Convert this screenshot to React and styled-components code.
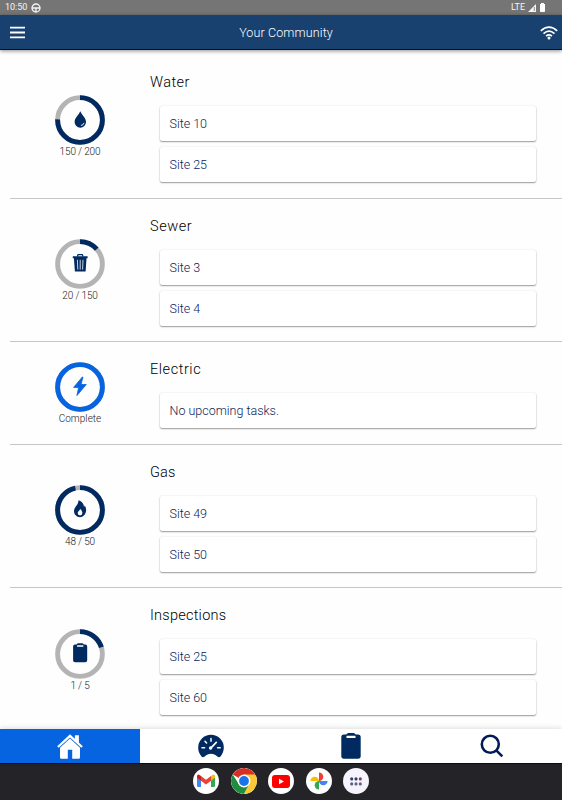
import React from 'react';
import styled, { createGlobalStyle } from 'styled-components';

const navy = '#002a60';
const blue = '#0664e0';

const GlobalStyle = createGlobalStyle`
* { box-sizing: border-box; }
html, body { margin: 0; padding: 0; background: #fefefe; }
body {
    font-family: Roboto, "Liberation Sans", sans-serif;
    overflow: hidden;
}
`;

const Screen = styled.div`
width: 562px;
height: 800px;
display: flex;
flex-direction: column;
background: #fefefe;
overflow: hidden;
`;

const StatusBar = styled.div`
height: 15px;
flex: none;
display: flex;
align-items: center;
gap: 3.5px;
padding: 0 16px 0 5px;
background: #757575;
color: #f4f4f4;
font-size: 9px;
line-height: 15px;
`;

const StatusRight = styled.div`
margin-left: auto;
display: flex;
align-items: center;
gap: 2.5px;
`;

const Header = styled.header`
height: 35px;
flex: none;
display: grid;
grid-template-columns: 60px 1fr 60px;
align-items: center;
padding: 1px 4px 0 10px;
background: #18416f;
border-bottom: 1px solid #000b4c;
box-shadow: 0 1px 4px rgba(0, 0, 0, 0.45);
z-index: 1;
`;

const HeaderTitle = styled.h1`
margin: 0;
padding-left: 4px;
text-align: center;
color: #fff;
font-size: 12.5px;
font-weight: 300;
letter-spacing: ${props => props.$spacing}px;
`;

const WifiHolder = styled.div`
display: flex;
justify-content: flex-end;
`;

const List = styled.main`
flex: 1;
min-height: 0;
overflow: hidden;
padding: 5px 0 0 10px;
`;

const Section = styled.section`
display: flex;
height: ${props => props.$single ? 102.5 : 143.5}px;
border-bottom: 1px solid #c6c6c6;
&:last-child { border-bottom: none; }
`;

const Progress = styled.div`
width: 140px;
flex: none;
display: flex;
flex-direction: column;
align-items: center;
justify-content: center;
`;

const Dial = styled.svg`
display: block;
width: 50px;
height: 50px;
`;

const Count = styled.div`
height: 12px;
font-size: 10px;
line-height: 13px;
font-weight: 300;
color: #222;
letter-spacing: ${props => props.$spacing}px;
`;

const Tasks = styled.div`
flex: 1;
padding: 16px 26px 0 0;
`;

const Title = styled.h2`
margin: 0;
height: 35px;
font-size: 14.5px;
line-height: 23px;
font-weight: 300;
color: #000;
letter-spacing: ${props => props.$spacing}px;
`;

const Card = styled.div`
height: 35px;
margin: 0 0 6.2px 9.5px;
padding-left: 10px;
border-radius: 2px;
background: #fff;
box-shadow: 0 1px 1.5px rgba(0, 0, 0, 0.38), 0 0 2px rgba(0, 0, 0, 0.1);
color: #0b1c58;
font-size: 12.5px;
font-weight: 300;
line-height: 35px;
letter-spacing: ${props => props.$spacing}px;
`;

const TabBar = styled.nav`
height: 34px;
flex: none;
display: grid;
grid-template-columns: 140px 141px 140px 141px;
background: #fff;
box-shadow: 0 -1px 5px rgba(0, 0, 0, 0.13);
z-index: 1;
`;

const Tab = styled.div`
display: flex;
align-items: center;
justify-content: center;
background: ${props => props.$active ? blue : '#fff'};
`;

const SystemBar = styled.footer`
height: 37px;
flex: none;
display: flex;
align-items: center;
justify-content: center;
gap: 11.5px;
padding-bottom: 2px;
border-top: 1px solid #0b0e0c;
background: #242328;
`;

const AppButton = styled.div`
width: 26px;
height: 26px;
display: flex;
align-items: center;
justify-content: center;
border-radius: 50%;
overflow: hidden;
background: ${props => props.$tint || '#fff'};
`;

// icons inside the dials, drawn on the 50x50 canvas of the dial
const Drop = () => (
    <g>
        <path d="M25.300 16.300C23.800 20 19.600 22.800 19.600 27a5.700 5.700 0 0 0 11.400 0C31 22.800 26.800 20 25.300 16.300z" />
        <path d="M29 28.200a3 3 0 0 1-2.700 2.200" fill="none" stroke="#fff" strokeWidth=".9" strokeLinecap="round" />
    </g>
);

const Trash = () => (
    <g>
        <path d="M22.700 17.600v-1.100q0-.8.800-.8h3.400q.8 0 .8.800v1.100" fill="none" stroke="currentColor" strokeWidth="1.300" />
        <path d="M17.800 17.300h14.800v1.900h-1.100L30.600 32.600H19.900L18.900 19.200h-1.100z" />
        <path d="M22.400 20.800l.4 9.800M25.200 20.800v9.800M28 20.800l-.4 9.800" stroke="#fff" strokeWidth=".8" />
    </g>
);

const Bolt = () => <path d="M27.300 15L18.600 25.400h5l-1.700 8.200 9.400-11.100h-5.300l2-7.500z" stroke="currentColor" strokeWidth=".8" />;

const Flame = () => (
    <g>
        <path d="M23.500 15.200c3.500 1 5.200 3.500 5.500 6.500.4-.3.700-.8.800-1.300 1 1.900 1.500 3.500 1.300 5.400-.4 3.700-3 6.400-6.100 6.400-3.400 0-6-2.700-6-6.100 0-4 4.600-5.800 4.500-10.900z" />
        <path d="M25.300 24c1.500 1.500 2.100 2.900 2.100 4.100a2.300 2.300 0 0 1-4.700 0c0-1.600 1.500-2.200 2.600-4.100z" fill="#fff" />
    </g>
);

const Clipboard = () => (
    <g>
        <path d="M20 15.500h1.600q.6-1.300 1.800-1.300h3.600q1.200 0 1.800 1.300h1.500q1.900 0 1.900 1.900v13.900q0 1.900-1.900 1.900H20q-1.900 0-1.900-1.900V17.400q0-1.900 1.900-1.900z" />
        <rect x="22" y="16.300" width="6.400" height="1.500" rx=".4" fill="#fff" />
    </g>
);

const sections = [
    { name: 'Water', spacing: 0.45, icon: <Drop />, done: 150, total: 200, sites: ['Site 10', 'Site 25'] },
    { name: 'Sewer', spacing: 0.55, icon: <Trash />, done: 20, total: 150, sites: ['Site 3', 'Site 4'] },
    { name: 'Electric', spacing: 0.55, icon: <Bolt />, done: 1, total: 1, sites: [] },
    { name: 'Gas', spacing: 0.1, icon: <Flame />, done: 48, total: 50, sites: ['Site 49', 'Site 50'] },
    { name: 'Inspections', spacing: 0.25, icon: <Clipboard />, done: 1, total: 5, sites: ['Site 25', 'Site 60'] },
];

const RING = 2 * Math.PI * 22.4;

function ProgressDial({ done, total, icon }) {
    const complete = done === total;
    const color = complete ? blue : navy;
    return (
        <Progress>
            <Dial viewBox="0 0 50 50" color={color} fill={color}>
                <circle cx="25" cy="25" r="22.4" fill="none" stroke="#b4b4b4" strokeWidth="4.900" />
                <circle
                    cx="25" cy="25" r="22.4" fill="none" stroke={color} strokeWidth="4.900"
                    strokeDasharray={complete ? undefined : `${RING * done / total} ${RING}`}
                    transform="rotate(-90 25 25)"
                />
                {icon}
            </Dial>
            <Count $spacing={complete ? 0.05 : -0.15}>{complete ? 'Complete' : `${done} / ${total}`}</Count>
        </Progress>
    );
}

function TaskSection({ section }) {
    const { name, spacing, sites } = section;
    return (
        <Section $single={sites.length === 0}>
            <ProgressDial {...section} />
            <Tasks>
                <Title $spacing={spacing}>{name}</Title>
                {sites.map(site => <Card key={site} $spacing={-0.02}>{site}</Card>)}
                {sites.length === 0 && <Card $spacing={0}>No upcoming tasks.</Card>}
            </Tasks>
        </Section>
    );
}

const GlobeIcon = () => (
    <svg width="10" height="10" viewBox="0 0 10 10" fill="none" stroke="#f4f4f4" strokeWidth="1.300">
        <circle cx="5" cy="5" r="4" />
        <path d="M1 5h8M5 5v4" />
    </svg>
);

const MenuIcon = () => (
    <svg width="15" height="13" viewBox="0 0 15 13" fill="#fff">
        <path d="M0 .8h15v1.800H0zM0 5.600h15v1.800H0zM0 10.400h15v1.800H0z" />
    </svg>
);

const WifiIcon = () => (
    <svg width="18" height="14" viewBox="0 0 18 14" fill="none" stroke="#fff" strokeWidth="1.700">
        <path d="M.8 4.900Q9-2.500 17.200 4.900M3.500 7.600q5.500-4.800 11 0M6.100 10.200q2.900-2.500 5.800 0" />
        <circle cx="9" cy="12.100" r="1.500" fill="#fff" stroke="none" />
    </svg>
);

const HomeIcon = () => (
    <svg width="26" height="25" viewBox="0 0 26 25" fill="#fff">
        <path d="M13 .2L.2 12.200l1.500 1.600L13 3.400l11.300 10.400 1.500-1.600-3.900-3.700V1.200h-4v3.600z" />
        <path d="M13 4.500L3 13.700v9.700q0 1.300 1.300 1.300h6.500v-8.900h4.400v8.900h6.400q1.400 0 1.400-1.300v-9.700z" />
    </svg>
);

const GaugeIcon = () => (
    <svg width="26" height="24" viewBox="0 0 26 24">
        <path d="M3.500 22.500A12.800 12.800 0 0 1 .2 13.600a12.800 12.800 0 0 1 25.600 0c0 3.400-1.200 6.500-3.300 8.900-.8.900-2 .8-2.800.3-4.100-4.200-9.300-4.200-13.400 0-.8.500-2 .6-2.800-.3z" fill={navy} />
        <path d="M13 4.400v2.800M7 7.300l1.600 1.700M4 13.800h2.600M19.600 13.800h2.600" stroke="#fff" strokeWidth="1.500" strokeLinecap="round" />
        <path d="M12.500 14.300l5.800-5.900" stroke="#fff" strokeWidth="1.700" strokeLinecap="round" />
        <circle cx="12.600" cy="14" r="1.700" fill="#fff" />
    </svg>
);

const ClipboardTabIcon = () => (
    <svg width="20" height="26" viewBox="0 0 20 26" fill={navy}>
        <path d="M3 1.600h2.300Q6 0 7.500 0h5Q14 0 14.700 1.600H17q2.700 0 2.700 2.700V23q0 2.700-2.700 2.700H3Q.3 25.700.3 23V4.300q0-2.700 2.700-2.700z" />
        <rect x="5.400" y="2.800" width="9.200" height="2.200" rx=".7" fill="#fff" />
    </svg>
);

const SearchIcon = () => (
    <svg width="24" height="24" viewBox="0 0 24 24" fill="none" stroke="#001b58" strokeWidth="2.600">
        <circle cx="10.300" cy="10.300" r="8.500" />
        <path d="M16.300 16.300l6 6" />
    </svg>
);

const GmailIcon = () => (
    <svg width="18" height="14" viewBox="0 0 18 14">
        <path d="M0 2.500l4 3V13H1.200Q0 13 0 11.800z" fill="#4285f4" />
        <path d="M18 2.500l-4 3V13h2.800q1.200 0 1.200-1.200z" fill="#34a853" />
        <path d="M14 2l1.400-1.100Q18-.4 18 2.500v1.300l-4 3z" fill="#fbbc04" />
        <path d="M4 2L2.600.9Q0-.4 0 2.500v1.300l4 3z" fill="#c5221f" />
        <path d="M4 2l5 3.800L14 2v4.800l-5 3.800-5-3.800z" fill="#ea4335" />
    </svg>
);

const ChromeIcon = () => (
    <svg width="26" height="26" viewBox="0 0 26 26">
        <path d="M13 13L1.740 6.500A13 13 0 0 1 24.260 6.500z" fill="#d93025" />
        <path d="M13 6.400h11.260A13 13 0 0 1 12.900 26L18.200 16z" fill="#fcc934" />
        <path d="M1.740 6.500A13 13 0 0 0 12.900 26L18.200 16 13 13 7.800 16z" fill="#1e8e3e" />
        <circle cx="13" cy="13" r="6.400" fill="#fff" />
        <circle cx="13" cy="13" r="4.900" fill="#1a73e8" />
    </svg>
);

const YoutubeIcon = () => (
    <svg width="18" height="13" viewBox="0 0 18 13">
        <rect width="18" height="13" rx="3" fill="#f00" />
        <path d="M7 3.700v5.600l5-2.800z" fill="#fff" />
    </svg>
);

const PhotosIcon = () => (
    <svg width="18" height="18" viewBox="0 0 18 18">
        <path d="M9 9H.4a4.300 4.300 0 0 1 8.600 0z" fill="#fbbc04" />
        <path d="M9 9V.4a4.300 4.300 0 0 1 0 8.600z" fill="#ea4335" />
        <path d="M9 9h8.600a4.300 4.300 0 0 1-8.600 0z" fill="#4285f4" />
        <path d="M9 9v8.600A4.300 4.300 0 0 1 9 9z" fill="#34a853" />
    </svg>
);

const DotsIcon = () => (
    <svg width="12" height="9" viewBox="0 0 12 9">
        <circle cx="1.700" cy="1.900" r="1.550" fill="#24427a" />
        <circle cx="6" cy="1.900" r="1.550" fill="#3b3564" />
        <circle cx="10.300" cy="1.900" r="1.550" fill="#714064" />
        <circle cx="1.700" cy="6.900" r="1.550" fill="#536080" />
        <circle cx="6" cy="6.900" r="1.550" fill="#5e6380" />
        <circle cx="10.300" cy="6.900" r="1.550" fill="#5e6380" />
    </svg>
);

export default function App() {
    return (
        <Screen>
            <GlobalStyle />
            <StatusBar>
                <span>10:50</span>
                <GlobeIcon />
                <StatusRight>
                    <span>LTE</span>
                    <svg width="8" height="8" viewBox="0 0 8 8">
                        <path d="M8 0v8H0z" fill="#f4f4f4" />
                        <path d="M6.300 3v4" stroke="#757575" strokeWidth=".8" />
                    </svg>
                    <svg width="8" height="9" viewBox="0 0 8 9" fill="#fff">
                        <path d="M3 0h3v1h1v7.200q0 .8-.8.800H2.800Q2 9 2 8.200V1h1z" />
                    </svg>
                </StatusRight>
            </StatusBar>
            <Header>
                <MenuIcon />
                <HeaderTitle $spacing={0.12}>Your Community</HeaderTitle>
                <WifiHolder><WifiIcon /></WifiHolder>
            </Header>
            <List>
                {sections.map(section => <TaskSection key={section.name} section={section} />)}
            </List>
            <TabBar>
                <Tab $active><HomeIcon /></Tab>
                <Tab><GaugeIcon /></Tab>
                <Tab><ClipboardTabIcon /></Tab>
                <Tab><SearchIcon /></Tab>
            </TabBar>
            <SystemBar>
                <AppButton><GmailIcon /></AppButton>
                <AppButton><ChromeIcon /></AppButton>
                <AppButton><YoutubeIcon /></AppButton>
                <AppButton><PhotosIcon /></AppButton>
                <AppButton $tint="#f6f3fc"><DotsIcon /></AppButton>
            </SystemBar>
        </Screen>
    );
}
